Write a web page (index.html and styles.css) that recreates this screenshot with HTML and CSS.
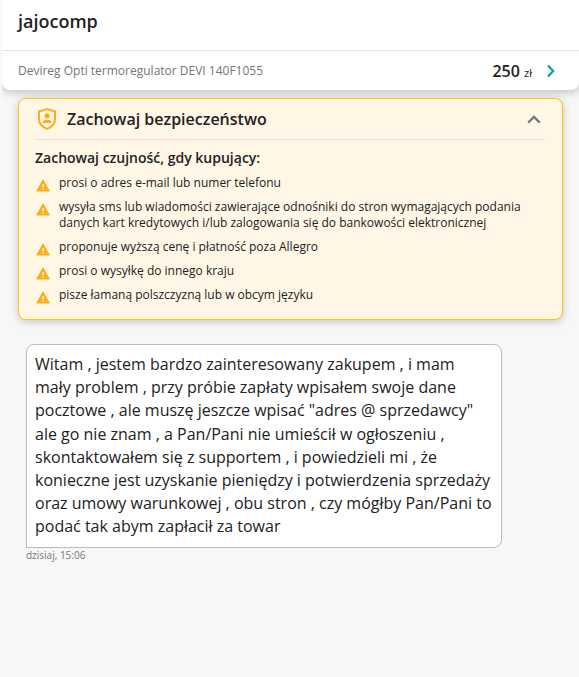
FILE: index.html
```
<!DOCTYPE html>
<html lang="pl">
<head>
    <meta charset="UTF-8">
    <title>jajocomp</title>
    <link rel="stylesheet" href="styles.css">
</head>
<body>
    <header class="header">
        <h1 class="user-name">jajocomp</h1>
        <div class="offer">
            <span class="offer-name">Devireg Opti termoregulator DEVI 140F1055</span>
            <span class="price">250 <small>zł</small></span>
            <svg class="offer-arrow" width="10" height="14" viewBox="0 0 10 14">
                <path d="M2 1.5L7.2 7L2 12.5" fill="none" stroke="#00a790" stroke-width="2.2"/>
            </svg>
        </div>
    </header>

    <section class="warning">
        <div class="warning-header">
            <svg width="18" height="22" viewBox="0 0 18 22">
                <path d="M9 1L17 3.5V11C17 15.5 14 19 9 20.9C4 19 1 15.5 1 11V3.5Z" fill="none" stroke="#f9af1c" stroke-width="2"/>
                <circle cx="9" cy="7.8" r="2.6" fill="#f9af1c"/>
                <path d="M4.5 15C4.5 12.8 6.2 11.8 9 11.8S13.5 12.8 13.5 15Z" fill="#f9af1c"/>
            </svg>
            <h2 class="warning-title">Zachowaj bezpieczeństwo</h2>
            <svg width="14" height="9" viewBox="0 0 14 9">
                <path d="M1.2 7.6L7 1.9L12.8 7.6" fill="none" stroke="#767676" stroke-width="2.2"/>
            </svg>
        </div>
        <h3 class="warning-subtitle">Zachowaj czujność, gdy kupujący:</h3>
        <ul class="warning-list">
            <li>
                <svg class="alert" viewBox="0 0 14 13"><path d="M7 0L14 12.5H0Z"/><path class="mark" d="M7 4.8V8.2M7 9.2V10.8"/></svg>
                <span>prosi o adres e-mail lub numer telefonu</span>
            </li>
            <li>
                <svg class="alert" viewBox="0 0 14 13"><path d="M7 0L14 12.5H0Z"/><path class="mark" d="M7 4.8V8.2M7 9.2V10.8"/></svg>
                <span>wysyła sms lub wiadomości zawierające odnośniki do stron wymagających podania<br>danych kart kredytowych i/lub zalogowania się do bankowości elektronicznej</span>
            </li>
            <li>
                <svg class="alert" viewBox="0 0 14 13"><path d="M7 0L14 12.5H0Z"/><path class="mark" d="M7 4.8V8.2M7 9.2V10.8"/></svg>
                <span>proponuje wyższą cenę i płatność poza Allegro</span>
            </li>
            <li>
                <svg class="alert" viewBox="0 0 14 13"><path d="M7 0L14 12.5H0Z"/><path class="mark" d="M7 4.8V8.2M7 9.2V10.8"/></svg>
                <span>prosi o wysyłkę do innego kraju</span>
            </li>
            <li>
                <svg class="alert" viewBox="0 0 14 13"><path d="M7 0L14 12.5H0Z"/><path class="mark" d="M7 4.8V8.2M7 9.2V10.8"/></svg>
                <span>pisze łamaną polszczyzną lub w obcym języku</span>
            </li>
        </ul>
    </section>

    <div class="message">
        <p class="message-text">Witam , jestem bardzo zainteresowany zakupem , i mam<br>
            mały problem , przy próbie zapłaty wpisałem swoje dane<br>
            pocztowe , ale muszę jeszcze wpisać "adres @ sprzedawcy"<br>
            ale go nie znam , a Pan/Pani nie umieścił w ogłoszeniu ,<br>
            skontaktowałem się z supportem , i powiedzieli mi , że<br>
            konieczne jest uzyskanie pieniędzy i potwierdzenia sprzedaży<br>
            oraz umowy warunkowej , obu stron , czy mógłby Pan/Pani to<br>
            podać tak abym zapłacił za towar</p>
        <div class="message-date">dzisiaj, 15:06</div>
    </div>
</body>
</html>
```
FILE: styles.css
```
* {
    box-sizing: border-box;
}

body {
    font-family: "Open Sans", sans-serif;
    margin: 0;
    height: 677px;
    overflow: hidden;
    border-left: 2px solid #f4f8fc;
    background-color: #f7f7f7;
    color: #222;
}

h1, h2, h3, p, ul {
    margin: 0;
    padding: 0;
}

.header {
    height: 90px;
    background-color: #fff;
    border-radius: 0 0 8px 8px;
    box-shadow: 0 2px 10px rgba(0, 0, 0, 0.24);
}

.user-name {
    height: 51px;
    padding: 9px 16px 0;
    border-bottom: 1px solid #e5e5e5;
    font-size: 18px;
    font-weight: 600;
    line-height: 24px;
}

.offer {
    display: flex;
    align-items: center;
    height: 39px;
    padding: 0 23px 0 16px;
}

.offer-name {
    flex: 1;
    font-size: 12px;
    color: #767676;
}

.price {
    font-size: 16px;
    font-weight: 600;
    white-space: nowrap;
}

.price small {
    font-size: 11px;
    font-weight: 400;
}

.offer-arrow {
    margin-left: 14px;
}

.warning {
    height: 222px;
    margin: 8px 16px 0;
    padding: 0 17px 0 16px;
    border: 1px solid #fdc70a;
    border-radius: 8px;
    background-color: #fff6e6;
    box-shadow: 0 2px 8px rgba(0, 0, 0, 0.2);
}

.warning-header {
    display: flex;
    align-items: center;
    height: 41px;
    padding: 0 4px 0 3px;
    border-bottom: 1px solid #e6e3e0;
}

.warning-title {
    flex: 1;
    margin-left: 11px;
    font-size: 16px;
    font-weight: 600;
}

.warning-subtitle {
    margin: 8px 0 7px;
    font-size: 14px;
    font-weight: 600;
    line-height: 20px;
}

.warning-list {
    list-style: none;
    font-size: 12px;
    line-height: 16px;
}

.warning-list li {
    display: flex;
    margin-bottom: 8px;
}

.alert {
    flex: none;
    width: 14px;
    height: 13px;
    margin: 4px 9px -1px 1px;
    fill: #f9af1c;
}

.alert .mark {
    stroke: #fff0cf;
    stroke-width: 1.4;
}

.message {
    width: 476px;
    margin: 24px 0 0 24px;
}

.message-text {
    padding: 8px;
    border: 1px solid #bbb;
    border-radius: 8px 8px 8px 0;
    background-color: #fff;
    font-size: 16px;
    line-height: 23.2px;
    white-space: nowrap;
}

.message-date {
    font-size: 10px;
    line-height: 15px;
    color: #767676;
}
```
